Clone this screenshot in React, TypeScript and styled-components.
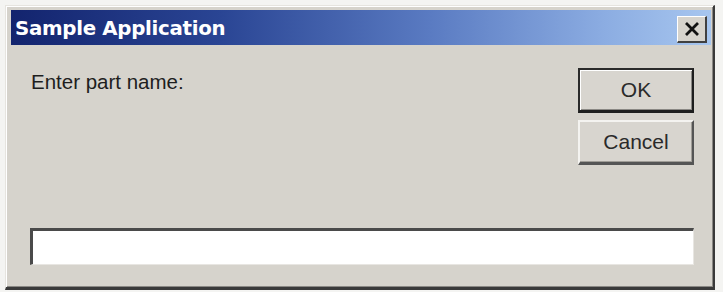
import React from "react";
import styled, { createGlobalStyle } from "styled-components";

const Global = createGlobalStyle`
  html, body { margin: 0; padding: 0; background: #f4f4f2; }
  body { width: 723px; height: 292px; overflow: hidden; }
`;

const Page = styled.div`
  padding: 5px 0 0 5px;
`;

const Window = styled.div`
  width: 710px;
  height: 285px;
  box-sizing: border-box;
  background: #d6d3cc;
  border-top: 1px solid #e6e4df;
  border-left: 1px solid #e6e4df;
  border-right: 2px solid #3a3a3a;
  border-bottom: 3px solid #3a3a3a;
  box-shadow: inset 1px 1px 0 #ffffff, inset -1px -1px 0 #8a8884;
  padding: 4px 2px 0 5px;
  display: flex;
  flex-direction: column;
`;

const TitleBar = styled.div`
  height: 35px;
  flex: none;
  background: linear-gradient(90deg, #13246e 0%, #2a4594 30%, #5a7bc2 60%, #8cade2 85%, #a7c6ef 100%);
  display: flex;
  align-items: center;
  justify-content: space-between;
  padding: 0 4px 0 4px;
`;

const Title = styled.span`
  font-family: "DejaVu Sans", Verdana, sans-serif;
  font-weight: bold;
  font-size: 19.8px;
  color: #ffffff;
  letter-spacing: -0.3px;
  margin-top: 1px;
`;

const CloseButton = styled.div`
  width: 30px;
  height: 27px;
  box-sizing: border-box;
  background: #d6d3cc;
  border-top: 1px solid #ffffff;
  border-left: 1px solid #ffffff;
  border-right: 2px solid #404040;
  border-bottom: 2px solid #404040;
  display: flex;
  align-items: center;
  justify-content: center;
  margin-top: 3px;
`;

const Body = styled.div`
  flex: 1;
  display: flex;
  flex-direction: column;
  padding: 23px 17px 0 19px;
`;

const TopRow = styled.div`
  display: flex;
  justify-content: space-between;
  align-items: flex-start;
`;

const Label = styled.div`
  font-family: "Liberation Sans", Arial, sans-serif;
  font-size: 20.5px;
  color: #1e1e1e;
  margin-top: 2px;
  margin-left: 1px;
`;

const ButtonColumn = styled.div`
  display: flex;
  flex-direction: column;
  gap: 7px;
`;

const Button = styled.div<{ $default?: boolean }>`
  width: 116px;
  height: 45px;
  box-sizing: border-box;
  background: #d8d5cf;
  display: flex;
  align-items: center;
  justify-content: center;
  font-family: "Liberation Sans", Arial, sans-serif;
  font-size: 21px;
  color: #2a2a2a;
  border-top: 2px solid ${(p) => (p.$default ? "#2a2a2a" : "#f4f3f0")};
  border-left: 2px solid ${(p) => (p.$default ? "#2a2a2a" : "#f4f3f0")};
  border-right: 2px solid ${(p) => (p.$default ? "#1e1e1e" : "#555555")};
  border-bottom: 3px solid ${(p) => (p.$default ? "#1e1e1e" : "#555555")};
  box-shadow: ${(p) => (p.$default ? "inset 1px 1px 0 #ffffff, inset -1px -1px 0 #8a8884" : "inset -1px -1px 0 #a09d97")};
`;

const Input = styled.div`
  margin-top: auto;
  margin-bottom: 22px;
  height: 37px;
  box-sizing: border-box;
  background: #ffffff;
  border-top: 3px solid #4a4a4a;
  border-left: 3px solid #4a4a4a;
  border-right: 1px solid #e8e6e2;
  border-bottom: 1px solid #e8e6e2;
`;

export default function App() {
  return (
    <>
      <Global />
      <Page>
        <Window>
          <TitleBar>
            <Title>Sample Application</Title>
            <CloseButton>
              <svg width="16" height="14" viewBox="0 0 16 14">
                <path d="M2 1 L14 13 M14 1 L2 13" stroke="#111" strokeWidth="2.8" />
              </svg>
            </CloseButton>
          </TitleBar>
          <Body>
            <TopRow>
              <Label>Enter part name:</Label>
              <ButtonColumn>
                <Button $default>OK</Button>
                <Button>Cancel</Button>
              </ButtonColumn>
            </TopRow>
            <Input />
          </Body>
        </Window>
      </Page>
    </>
  );
}
